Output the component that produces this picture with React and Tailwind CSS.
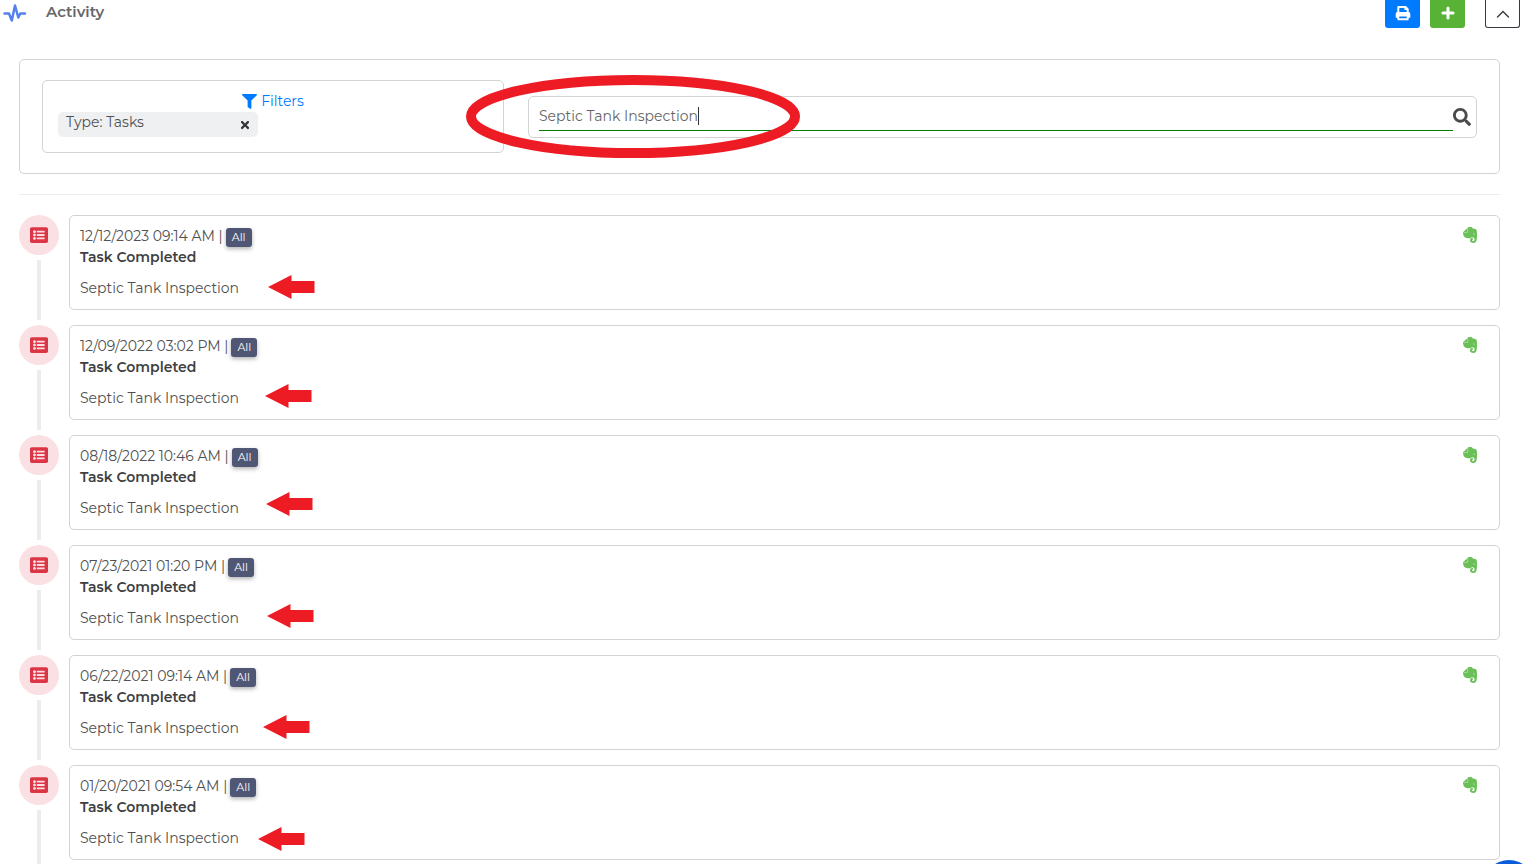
/**
 * Activity Page Component
 *
 * Timeline of property activity with a filter box and a text search.
 *
 * - Header with print / add / collapse buttons
 * - Filter chips and search field
 * - One card per activity, joined by a rail on the left
 * - Red callouts drawn over the search field and the results
 */

import React, { useState } from "react";
import { FaFilter, FaListAlt, FaSearch, FaTimes } from "react-icons/fa";

const activities = [
  { id: 1, date: "12/12/2023 09:14 AM" },
  { id: 2, date: "12/09/2022 03:02 PM" },
  { id: 3, date: "08/18/2022 10:46 AM" },
  { id: 4, date: "07/23/2021 01:20 PM" },
  { id: 5, date: "06/22/2021 09:14 AM" },
  { id: 6, date: "01/20/2021 09:54 AM" },
];

// Tip of each callout arrow
const arrows = [
  { x: 268, y: 287 },
  { x: 265, y: 396 },
  { x: 266, y: 504 },
  { x: 267, y: 616 },
  { x: 263, y: 727 },
  { x: 258, y: 839 },
];

function PulseIcon() {
  return (
    <svg
      className="w-6 h-6"
      viewBox="0 0 24 24"
      fill="none"
      stroke="#5580ee"
      strokeWidth="2.5"
      strokeLinecap="round"
      strokeLinejoin="round"
    >
      <path d="M1.500 13.500H6L8.800 20.500L12 5.500L15.300 17.500L17.300 13.500H22" />
    </svg>
  );
}

function PrintIcon() {
  return (
    <svg className="w-4 h-4" viewBox="0 0 16 16" fill="none" stroke="currentColor">
      <path d="M3.300 8V2H10.500L12.700 4.200V8" strokeWidth="2" strokeLinejoin="round" />
      <path d="M10 1.500V4.300H13" strokeWidth="1.200" />
      <path
        d="M3 7H13A2 2 0 0 1 15.300 9V12.800H12.500V10.500H3.500V12.800H.7V9A2 2 0 0 1 3 7Z"
        fill="currentColor"
        stroke="none"
      />
      <path d="M3.300 10.500H12.700V14.300H3.300Z" strokeWidth="2" strokeLinejoin="round" />
    </svg>
  );
}

function ElephantIcon() {
  return (
    <svg className="w-3.5 h-[18px]" viewBox="0 0 14 18">
      <path
        d="M5 1.500C7 .7 9.300 1.200 9.800 2.400L12.400 2.900C13.700 3.200 14 5 14 8.500C14 13.500 13.500 17 10.500 17C8.200 17 7 16 7 14.300C7 12.700 8.200 11.900 9.900 12.100V13.500C8.800 13.500 8.800 15.200 10.200 15.200C11.700 15.200 11.800 13.200 11.200 12.100C10.400 10.900 8.900 10.900 8 11.700C7 12.700 4.800 12.400 2.800 11.800C.8 11.200 0 8.500 0 6.200Z"
        fill="#6abf57"
      />
      <path d="M.5 6.400H4.700V1.800" fill="none" stroke="#b4dfab" strokeWidth=".8" />
      <path d="M10.200 8.300C10.400 7.300 11.700 7.300 12 8.500Z" fill="#e4f4e0" />
    </svg>
  );
}

function Header() {
  return (
    <header className="flex items-start h-[59px] pl-[3px] pr-[7px]">
      <PulseIcon />
      <h1 className="ml-[19px] flex-1 text-[15px] leading-6 font-semibold text-[#666]">
        Activity
      </h1>
      <button
        aria-label="Print"
        className="w-[35px] h-7 pb-0.5 flex items-center justify-center rounded-b-[3px] bg-[#007bff] text-white"
      >
        <PrintIcon />
      </button>
      <button
        aria-label="Add"
        className="ml-2.5 w-[35px] h-7 pb-0.5 flex items-center justify-center rounded-b-[3px] bg-[#57b236] text-white"
      >
        <svg
          className="w-3.5 h-3.5"
          viewBox="0 0 14 14"
          stroke="currentColor"
          strokeWidth="3"
          strokeLinecap="round"
        >
          <path d="M7 2V12M2 7H12" />
        </svg>
      </button>
      <button
        aria-label="Collapse"
        className="ml-5 w-[35px] h-7 flex items-center justify-center rounded-b-[3px] border border-t-0 border-[#343a40] text-[#343a40]"
      >
        <svg
          className="w-3.5 h-3.5"
          viewBox="0 0 14 14"
          fill="none"
          stroke="currentColor"
          strokeWidth="1.4"
          strokeLinecap="round"
        >
          <path d="M1.500 10L7 4.500L12.500 10" />
        </svg>
      </button>
    </header>
  );
}

function SearchPanel() {
  const [query, setQuery] = useState("Septic Tank Inspection");

  return (
    <section className="flex items-center gap-6 px-[22px] py-5 border border-[#d3d3d3] rounded-[5px]">
      <div className="w-[462px] h-[73px] px-[15px] pt-2.5 border border-[#d3d3d3] rounded-[5px]">
        <button className="mx-auto flex items-center gap-1 h-[21px] pb-px text-[#007bff]">
          <FaFilter className="w-[15px] h-[15px]" />
          Filters
        </button>
        <div className="w-[200px] h-[25px] flex items-start justify-between pl-2 pr-[7px] rounded-[5px] bg-[#eff0f2]">
          <span>Type: Tasks</span>
          <button aria-label="Remove filter" className="self-center text-[#333]">
            <FaTimes className="w-3 h-3" />
          </button>
        </div>
      </div>

      <form
        className="flex-1 h-[42px] flex items-center pl-2.5 pr-[5px] border border-[#d3d3d3] rounded-[5px]"
        onSubmit={(e) => e.preventDefault()}
      >
        <div className="relative flex-1 flex">
          <input
            type="text"
            aria-label="Search activity"
            value={query}
            onChange={(e) => setQuery(e.target.value)}
            className="w-full h-7 border-b border-[#008000] text-[#666] outline-none"
          />
          <span className="absolute left-[159px] top-1 w-px h-[18px] bg-[#333]" />
        </div>
        <button aria-label="Search" className="text-[#4a4a4a]">
          <FaSearch className="w-[18px] h-[18px]" />
        </button>
      </form>
    </section>
  );
}

function ActivityItem({ activity }) {
  return (
    <li className="flex h-[110px]">
      <div className="w-10 mr-2.5 flex flex-col items-center">
        <div className="w-10 h-10 flex items-center justify-center rounded-full bg-[#fae0e3] text-[#dc3545]">
          <FaListAlt className="w-[18px] h-[18px]" />
        </div>
        <div className="mt-[5px] w-1 h-[60px] bg-[#ececec]" />
      </div>
      <article className="flex-1 h-[95px] flex justify-between items-start pl-2.5 pr-[22px] pt-2.5 border border-[#d3d3d3] rounded-[5px]">
        <div>
          <div className="flex items-start gap-[3px] h-[21px]">
            <span>{activity.date} |</span>
            <span className="mt-0.5 px-1.5 h-[19px] leading-[19px] rounded-[3px] bg-[#4f5775] text-white text-[11px] shadow-[0_2px_4px_rgba(0,0,0,0.3)]">
              All
            </span>
          </div>
          <h2 className="font-semibold text-[#404040]">Task Completed</h2>
          <p className="mt-2.5">Septic Tank Inspection</p>
        </div>
        <ElephantIcon />
      </article>
    </li>
  );
}

function Callouts() {
  return (
    <svg
      aria-hidden="true"
      className="absolute left-0 top-0 w-[820px] h-[864px] pointer-events-none"
      viewBox="0 0 820 864"
    >
      <ellipse
        cx="633"
        cy="116.5"
        rx="162"
        ry="36.5"
        fill="none"
        stroke="#ed1c24"
        strokeWidth="10"
      />
      {arrows.map(({ x, y }) => (
        <path
          key={y}
          transform={`translate(${x} ${y})`}
          d="M0 0L23.500-12V-6H46.500V6H23.500V12Z"
          fill="#ed1c24"
        />
      ))}
    </svg>
  );
}

export default function App() {
  return (
    <div className="relative h-screen overflow-hidden bg-white font-['Montserrat','Inter',sans-serif] text-[14px] leading-[21px] text-[#505050]">
      <Header />
      <main className="pl-[19px] pr-[27px]">
        <SearchPanel />
        <hr className="my-5 border-[#ececec]" />
        <ul>
          {activities.map((activity) => (
            <ActivityItem key={activity.id} activity={activity} />
          ))}
        </ul>
      </main>
      <Callouts />
      <button
        aria-label="Open chat"
        className="absolute -right-2 -bottom-12 w-[52px] h-[52px] rounded-full bg-[#0b5cd8] shadow-lg"
      />
    </div>
  );
}
